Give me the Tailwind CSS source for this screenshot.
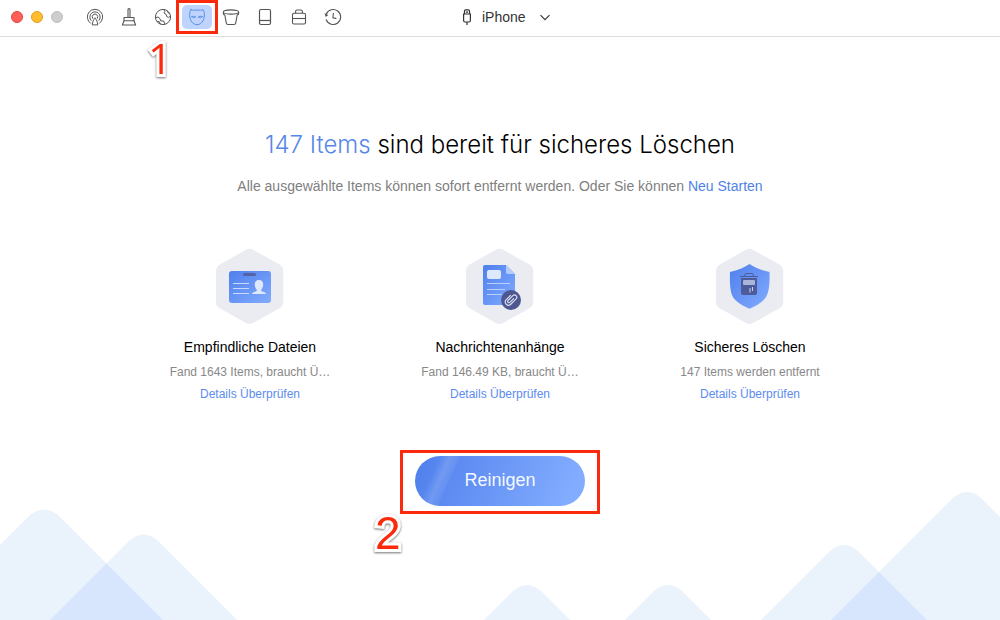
<!DOCTYPE html>
<html lang="de">
<head>
    <meta charset="UTF-8">
    <meta name="viewport" content="width=device-width, initial-scale=1.0">
    <title>Sicheres Löschen</title>
    <script src="https://cdn.jsdelivr.net/npm/@tailwindcss/browser@4"></script>
</head>
<body class="relative flex min-h-screen flex-col overflow-x-hidden bg-white font-['Liberation_Sans',sans-serif] text-black">
    <!-- Toolbar -->
    <header class="grid h-[37px] grid-cols-[1fr_auto_1fr] items-center border-b border-[#dedede] pb-0.5">
        <div class="flex items-center gap-[17px] pl-[11px]">
            <div class="flex gap-2">
                <button aria-label="Schließen" class="size-3 rounded-full border border-[#e0443e] bg-[#ff5f57]"></button>
                <button aria-label="Minimieren" class="size-3 rounded-full border border-[#dea123] bg-[#febc2e]"></button>
                <button aria-label="Vergrößern" class="size-3 rounded-full border border-[#c0c0c0] bg-[#cdcdcd]"></button>
            </div>
            <nav class="flex gap-1 text-[#555]">
                <button aria-label="AirDrop" class="flex h-6 w-[30px] items-center justify-center">
                    <svg class="size-[18px]" viewBox="0 0 18 18" fill="none" stroke="currentColor" stroke-width="1" stroke-linecap="round" stroke-linejoin="round">
                        <path d="M4.400 15.200A7.700 7.700 0 1 1 13.600 15.200"/><path d="M5 12.400A5.200 5.200 0 1 1 13 12.400"/><path d="M6.600 10.300A2.800 2.800 0 1 1 11.400 10.300"/>
                        <path d="M9 10.200C7.400 11.500 6.400 14 6.300 16.900H11.700C11.600 14 10.600 11.500 9 10.200Z"/>
                    </svg>
                </button>
                <button aria-label="Bereinigen" class="flex h-6 w-[30px] items-center justify-center">
                    <svg class="size-[18px]" viewBox="0 0 18 18" fill="none" stroke="currentColor" stroke-width="1.1" stroke-linejoin="round">
                        <path d="M8 9.5V1.6Q8 .6 9 .6T10 1.6V9.500"/><path d="M4 9.500H14V12.800H4Z"/><path d="M4 12.800L2.400 17H15.600L14 12.800"/>
                    </svg>
                </button>
                <button aria-label="Internet" class="flex h-6 w-[30px] items-center justify-center">
                    <svg class="size-[18px]" viewBox="0 0 18 18" fill="none" stroke="currentColor" stroke-width="1" stroke-linejoin="round">
                        <circle cx="9" cy="9" r="7.600"/>
                        <path d="M9.700 1.500L10.800 3.400L10 5L12 6.200L12.800 8.600L14.600 9.400L16.400 8.200M13 2.800L14 4.600L15.600 5.400"/>
                        <path d="M1.600 9.700L4 9L6 10.600L6.600 12.800L9.600 13L11 16.200M3 13.600L5.200 13.600L6.400 16"/>
                    </svg>
                </button>
                <!-- Active tool, marked as step 1 -->
                <div class="relative">
                    <button aria-label="Privatsphäre" aria-current="page" class="flex h-6 w-[30px] items-center justify-center rounded-[5px] bg-[#bfd4fd] text-[#5b8de8]">
                        <svg class="size-[18px]" viewBox="0 0 18 18" fill="none" stroke="currentColor" stroke-width="1" stroke-linecap="round" stroke-linejoin="round">
                            <path d="M3 1.600C4.800 2.900 6.400 2 9 2S13.200 2.900 15 1.600C16.500 4 16.800 7 15.900 10.500C15 14 12 16.700 9 16.700S3 14 2.100 10.500C1.200 7 1.500 4 3 1.600Z"/>
                            <path fill="currentColor" fill-opacity=".3" stroke-width=".8" d="M3.800 8.800Q5.800 7.200 7.800 9Q5.800 10.600 3.800 8.800ZM14.200 8.800Q12.200 7.200 10.200 9Q12.200 10.600 14.200 8.800Z"/>
                        </svg>
                    </button>
                    <div class="pointer-events-none absolute -inset-x-1.5 -inset-y-[5px] border-3 border-[#fb2a0c]"></div>
                    <span class="pointer-events-none absolute top-7 -left-[34px] font-['Open_Sans',sans-serif] text-[42px] leading-[50px] text-[#fb2a0c] drop-shadow-[0_1px_1px_rgba(0,0,0,0.55)] [-webkit-text-stroke:6px_white] [paint-order:stroke_fill]">1</span>
                </div>
                <button aria-label="Papierkorb" class="flex h-6 w-[30px] items-center justify-center">
                    <svg class="size-[18px]" viewBox="0 0 18 18" fill="none" stroke="currentColor" stroke-width="1.1" stroke-linejoin="round">
                        <ellipse cx="9" cy="4" rx="7.600" ry="2.100"/><path d="M1.400 4V5.600Q1.500 6.600 2.800 7L4.300 15.200Q4.500 16.500 6 16.500H12Q13.500 16.500 13.700 15.200L15.200 7Q16.500 6.600 16.600 5.600V4"/>
                    </svg>
                </button>
                <button aria-label="Gerät" class="flex h-6 w-[30px] items-center justify-center">
                    <svg class="size-[18px]" viewBox="0 0 18 18" fill="none" stroke="currentColor" stroke-width="1.200">
                        <rect x="3.500" y="1.500" width="11" height="15" rx="1.500"/><path d="M3.500 12.500H14.500"/>
                    </svg>
                </button>
                <button aria-label="Werkzeuge" class="flex h-6 w-[30px] items-center justify-center">
                    <svg class="size-[18px]" viewBox="0 0 18 18" fill="none" stroke="currentColor" stroke-width="1.1">
                        <path d="M5.600 5.200V3.400Q5.600 2 7 2H11Q12.400 2 12.400 3.400V5.200"/><rect x="2.500" y="5.300" width="13" height="10.700" rx="1.400"/><path d="M2.500 10.500H15.500"/>
                    </svg>
                </button>
                <button aria-label="Verlauf" class="flex h-6 w-[30px] items-center justify-center">
                    <svg class="size-[18px]" viewBox="0 0 18 18" fill="none" stroke="currentColor" stroke-width="1.1" stroke-linecap="round">
                        <path d="M2.200 6.200A7.500 7.500 0 1 1 2.200 11.800"/><path fill="currentColor" stroke="none" d="M.5 5.200L4.300 7L1.800 9Z"/><path d="M9.400 5.200L8.900 9.800L12 10.400"/>
                    </svg>
                </button>
            </nav>
        </div>

        <!-- Device selector -->
        <label class="relative flex items-center pl-3 text-[#333]">
            <svg class="h-[18px] w-2.5" viewBox="0 0 10 18" fill="none" stroke="currentColor" stroke-width="1.200">
                <path d="M2.500 6V3Q2.500 1.800 3.700 1.800H6.300Q7.500 1.800 7.500 3V6"/><path d="M1.600 6H8.400V12.500Q8.400 14 7 14H3Q1.600 14 1.600 12.500ZM5 14V17M4 4.200H6"/>
            </svg>
            <select aria-label="Gerät wählen" class="ml-2.5 w-[68px] appearance-none bg-transparent text-sm outline-none">
                <option>iPhone</option>
            </select>
            <svg class="pointer-events-none absolute right-0 size-2.5" viewBox="0 0 10 10" fill="none" stroke="currentColor" stroke-width="1.1">
                <path d="M.5 3.200L5 7.700L9.500 3.200"/>
            </svg>
        </label>
    </header>

    <!-- Hills along the bottom edge -->
    <svg class="pointer-events-none absolute inset-x-0 bottom-0 w-full" viewBox="0 0 1000 130">
        <g fill="#eaf2fc">
            <path d="M0 130V55L28 27Q44 12 60 27L163 130Z"/>
            <path d="M50 130L128 52Q143.500 37 159 52L237 130Z"/>
            <path d="M484 130L511 103Q527 87 543 103L570 130Z"/>
            <path d="M625 130L652 103Q668 87 684 103L711 130Z"/>
            <path d="M761 130L828 63Q844 47 860 63L927 130Z"/>
            <path d="M831 130L951 10Q967 -6 983 10L1000 27V130Z"/>
        </g>
        <path fill="#d8e6fd" d="M50 130L106.500 73.500L163 130ZM831 130L879 82L927 130Z"/>
    </svg>

    <main class="relative flex flex-col items-center pt-[92px]">
        <h1 class="font-['Inter',sans-serif] text-2xl leading-8 font-light"><span class="text-[#5887e8]">147 Items</span> sind bereit für sicheres Löschen</h1>
        <p class="mt-[15px] text-sm leading-5 text-[#808080]">Alle ausgewählte Items können sofort entfernt werden. Oder Sie können <a href="#" class="text-[#4f82e8]">Neu Starten</a></p>

        <div class="mt-[52px] grid w-full max-w-[750px] grid-cols-3 text-center">
            <section class="flex flex-col items-center">
                <svg class="h-[76px] w-[68px]" viewBox="16 8 68 76">
                    <defs>
                        <linearGradient id="blue" x1="0" y1="0" x2="1" y2="1"><stop stop-color="#4f7fec"/><stop offset="1" stop-color="#82acff"/></linearGradient>
                        <path id="hexagon" fill="#ebecf2" d="M46 9.800Q49.500 7.800 53 9.800L79.500 24.500Q83.200 26.700 83.200 31V62Q83.200 66.200 79.500 68.300L53 83Q49.500 85 46 83L19.700 68.300Q16 66.200 16 62V31Q16 26.700 19.700 24.500Z"/>
                    </defs>
                    <use href="#hexagon"/>
                    <rect x="29" y="31" width="42" height="32" rx="3" fill="url(#blue)"/>
                    <rect x="43" y="33" width="13" height="3" rx="1.500" fill="#5463a6"/>
                    <path d="M33 43.500H49M33 48.500H49M33 53.500H49" stroke="#c9d9fc"/>
                    <path fill="#dfe9fe" d="M59 40C61.800 40 63.300 41.800 63.200 44.500C63.100 47 62.300 48.500 61.300 49.600V51C62 52 65.800 51.800 66 54H52C52.200 51.800 56 52 56.700 51V49.600C55.700 48.500 54.900 47 54.800 44.500C54.700 41.800 56.200 40 59 40Z"/>
                </svg>
                <h2 class="mt-[13px] text-sm leading-5">Empfindliche Dateien</h2>
                <p class="mt-[5px] text-xs leading-5 text-[#888]">Fand 1643 Items, braucht Ü…</p>
                <a href="#" class="mt-0.5 text-xs leading-5 text-[#5c8bf0]">Details Überprüfen</a>
            </section>
            <section class="flex flex-col items-center">
                <svg class="h-[76px] w-[68px]" viewBox="16 8 68 76">
                    <use href="#hexagon"/>
                    <path fill="url(#blue)" d="M35 25H56L65 34V65H35Q33 65 33 63V27Q33 25 35 25Z"/>
                    <path fill="#b5cbfb" d="M56 25L65 34H58Q56 34 56 32Z"/>
                    <rect x="37" y="30" width="14" height="9" rx="2" fill="#dfe9fe"/>
                    <path d="M37 43.500H60M37 49.500H55M37 54.500H52" stroke="#b9cefb"/>
                    <circle cx="61" cy="60" r="10" fill="#4f5791"/>
                    <path transform="translate(61 59.500) rotate(45)" fill="none" stroke="#dce2f5" stroke-width="1.100" stroke-linecap="round" d="M-3.200 -2.500V3.500A3.200 3.200 0 0 0 3.200 3.500V-4A2.300 2.300 0 0 0 -1.400 -4V2.800A1.300 1.300 0 0 0 1.200 2.800V-2.500"/>
                </svg>
                <h2 class="mt-[13px] text-sm leading-5">Nachrichtenanhänge</h2>
                <p class="mt-[5px] text-xs leading-5 text-[#888]">Fand 146.49 KB, braucht Ü…</p>
                <a href="#" class="mt-0.5 text-xs leading-5 text-[#5c8bf0]">Details Überprüfen</a>
            </section>
            <section class="flex flex-col items-center">
                <svg class="h-[76px] w-[68px]" viewBox="16 8 68 76">
                    <use href="#hexagon"/>
                    <path fill="url(#blue)" d="M49.500 24C55 27.500 61 30.500 69.500 32C70 46 68.500 54 65 58.500C61 63.500 55 66 49.500 68.800C44 66 38 63.500 34 58.500C30.500 54 29.500 46 30 32C38 30.500 44 27.500 49.500 24Z"/>
                    <path fill="none" stroke="#4f5c9c" d="M40 36.500H58M44.500 36L45.500 33.500H52.500L53.500 36"/>
                    <path fill="#4f5c9c" d="M41 38H57V53Q57 55 55 55H43Q41 55 41 53Z"/>
                    <rect x="43" y="40" width="12" height="5" rx="1" fill="#aab5d9"/>
                    <path stroke="#c8d0ea" d="M50 48V52.500M52.500 47V51"/>
                </svg>
                <h2 class="mt-[13px] text-sm leading-5">Sicheres Löschen</h2>
                <p class="mt-[5px] text-xs leading-5 text-[#888]">147 Items werden entfernt</p>
                <a href="#" class="mt-0.5 text-xs leading-5 text-[#5c8bf0]">Details Überprüfen</a>
            </section>
        </div>

        <!-- Clean button, marked as step 2 -->
        <div class="relative mt-[46px] border-3 border-[#fb2a0c] px-3 pt-[3px] pb-[5px]">
            <button class="relative h-[50px] w-[170px] overflow-hidden rounded-full bg-linear-[110deg,#4f7fec,#82acff_90%] pb-0.5 text-lg text-white/95">
                <span class="absolute inset-y-0 left-3.5 w-5 -skew-x-[24deg] bg-linear-to-r from-white/0 via-white/15 to-white/5"></span>
                <span class="relative">Reinigen</span>
            </button>
            <span class="pointer-events-none absolute top-[55px] -left-7 text-[46px] leading-[50px] text-[#fb2a0c] drop-shadow-[0_1px_1px_rgba(0,0,0,0.55)] [-webkit-text-stroke:6px_white] [paint-order:stroke_fill]">2</span>
        </div>
    </main>
</body>
</html>
